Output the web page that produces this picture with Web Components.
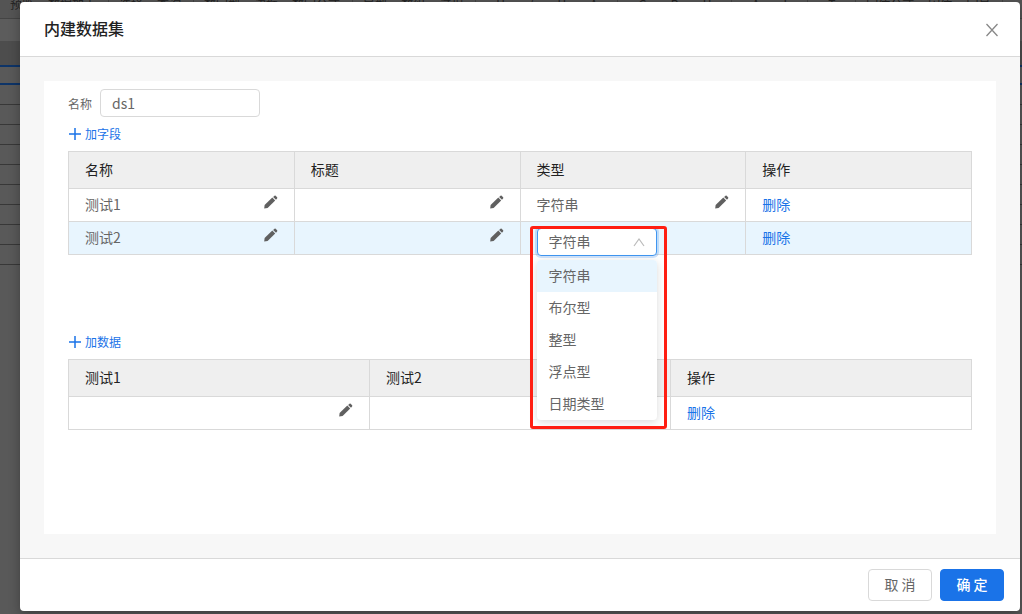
<!DOCTYPE html>
<html lang="zh-CN">
<head>
<meta charset="utf-8">
<title>内建数据集</title>
<style>
  html, body { margin: 0; height: 100%; }
  body {
    font-family: "Noto Sans CJK SC", sans-serif;
    font-size: 14px; line-height: 20px; color: #666;
    background: #595959; overflow: hidden;
    --blue: #1a73e8; --line: #d9d9d9;
  }
</style>
</head>
<body>
<designer-app></designer-app>
<script>
// Small base class: each element renders its own template into an open shadow root.
class Base extends HTMLElement {
  constructor() { super(); this.attachShadow({ mode: 'open' }); }
  connectedCallback() { this.shadowRoot.innerHTML = this.view(); }
}

// Report designer page dimmed behind the dialog.
customElements.define('page-behind', class extends Base {
  view() {
    const groups = [['预览', '数据加工'], ['选择', '查询'], ['数字型', '边框', '数字公式'], ['导型', '数组', '过程'], ['U', '/', 'U', 'A'], ['G', 'B', 'U'], ['A', 'I'], ['T'], ['字体公式', '宋体', '字号']];
    return `<style>
      :host { display: block; position: absolute; inset: 0; overflow: hidden; background: #595959; color: #222; font-size: 12px; z-index: 0; }
      .tools { display: flex; height: 18px; line-height: 8px; white-space: nowrap; background: #545454; border-bottom: 1px solid #444; }
      .group { display: flex; gap: 14px; padding: 0 12px 0 10px; border-right: 1px solid #444; }
      .icons { gap: 24px; padding: 0 20px; }
      .bar { height: 22px; background: #5c5c5c; }
      .head { height: 24px; background: #4d4d4d; }
      .sel { height: 16px; border: solid #0d3468; border-width: 2px 0; }
      .row { height: 19px; border-bottom: 1px solid #383838; }
    </style>
    <div class="tools">${groups.map(g => `<div class="group ${g[0].length === 1 ? 'icons' : ''}">${g.map(t => `<span>${t}</span>`).join('')}</div>`).join('')}</div>
    <div class="bar"></div><div class="head"></div><div class="sel"></div>
    ${'<div class="row"></div>'.repeat(9)}`;
  }
});

customElements.define('modal-dialog', class extends Base {
  view() {
    return `<style>
      :host { display: flex; flex-direction: column; flex: 1; min-width: 0; background: #fff; border-radius: 4px; box-shadow: 0 4px 12px rgba(0,0,0,.3); position: relative; }
      header { display: flex; align-items: center; justify-content: space-between; height: 54px; padding: 0 21px 0 24px; border-bottom: 1px solid var(--line); }
      h1 { margin: 0; padding-bottom: 2px; font-size: 16px; line-height: 24px; font-weight: 500; color: #222; }
      .close { display: flex; padding: 2px 0 0; border: 0; background: none; color: #888; }
      main { flex: 1; display: flex; padding: 24px; background: #f7f7f7; }
      .panel { flex: 1; min-width: 0; background: #fff; padding: 8px 24px; }
      footer { display: flex; justify-content: flex-end; gap: 8px; padding: 10px 16px; border-top: 1px solid var(--line); }
    </style>
    <header><h1>${this.getAttribute('heading')}</h1>
      <button class="close" aria-label="关闭"><svg width="14" height="14" viewBox="0 0 14 14" fill="none" stroke="currentColor" stroke-width="1.3"><path d="M1.5 1L12.5 13M12.5 1L1.5 13"/></svg></button>
    </header>
    <main><div class="panel"><slot></slot></div></main>
    <footer><slot name="actions"></slot></footer>`;
  }
});

customElements.define('ui-button', class extends Base {
  view() {
    return `<style>
      :host { display: block; }
      button { width: 64px; height: 32px; padding: 0 0 2px; font: inherit; color: #666; background: #fff; border: 1px solid var(--line); border-radius: 4px; }
      :host([primary]) button { color: #fff; background: var(--blue); border-color: var(--blue); font-weight: 500; }
    </style><button><slot></slot></button>`;
  }
});

customElements.define('text-field', class extends Base {
  view() {
    return `<style>
      :host { display: flex; align-items: center; gap: 8px; }
      label { padding-top: 2px; font-size: 12px; }
      input { box-sizing: border-box; width: 160px; height: 28px; padding: 0 11px; font: inherit; color: #666; border: 1px solid var(--line); border-radius: 4px; outline: 0; }
    </style><label for="f">${this.getAttribute('label')}</label><input id="f" value="${this.getAttribute('value')}">`;
  }
});

customElements.define('add-link', class extends Base {
  view() {
    return `<style>
      :host { display: flex; align-items: center; height: 34px; font-size: 12px; }
      a { display: flex; align-items: center; gap: 4px; color: var(--blue); text-decoration: none; }
    </style><a href="#"><svg width="13" height="12" viewBox="0 0 13 12" stroke="currentColor" stroke-width="1.5"><path d="M1 6H13M7 0V12"/></svg><slot></slot></a>`;
  }
});

customElements.define('edit-button', class extends Base {
  view() {
    return `<style>
      :host { display: block; }
      button { display: flex; padding: 0; border: 0; background: none; color: #606060; }
    </style><button aria-label="编辑"><svg width="14" height="14" viewBox="0 0 14 14" fill="currentColor"><path d="M.2 13.5L.6 10.1 8.3 2.6 11.2 5.5 3.6 13Z"/><path d="M9.1 1.9L10.5.7Q11.1.2 11.7.8L13.1 2.2Q13.6 2.8 13.1 3.4L12 4.8Z"/></svg></button>`;
  }
});

customElements.define('type-select', class extends Base {
  view() {
    const types = ['字符串', '布尔型', '整型', '浮点型', '日期类型'];
    return `<style>
      :host { display: block; position: relative; width: 120px; height: 28px; }
      select { appearance: none; box-sizing: border-box; width: 100%; height: 28px; padding: 0 11px 2px; font: inherit; color: #666; background: #fff; border: 1px solid #4096f0; border-radius: 4px; outline: 0; box-shadow: 0 0 0 2px rgba(26,115,232,.2); }
      .arrow { position: absolute; right: 12px; top: 9px; }
      ul { position: absolute; z-index: 2; top: 32px; left: 0; width: 100%; margin: 0; padding: 0; list-style: none; background: #fff; border-radius: 4px; box-shadow: 0 2px 8px rgba(0,0,0,.15); overflow: hidden; }
      li { padding: 5px 12px 7px; line-height: 20px; }
      li[aria-selected=true] { background: #e8f5fe; }
      .mark { position: absolute; z-index: 3; inset: -2px -10px -173px -7px; border: 3px solid #ff1e12; border-radius: 3px; pointer-events: none; }
    </style>
    <select aria-label="类型">${types.map(t => `<option>${t}</option>`).join('')}</select>
    <svg class="arrow" width="12" height="10" viewBox="0 0 12 10" fill="none" stroke="#bbb" stroke-width="1.2"><path d="M1 9L6 2L11 9"/></svg>
    <ul role="listbox">${types.map((t, i) => `<li role="option" aria-selected="${i === 0}">${t}</li>`).join('')}</ul>
    <div class="mark"></div>`;
  }
});

// columns="a,b,c"; rows separated by ";", cells by ",". "@" marks the open type selector.
customElements.define('data-grid', class extends Base {
  view() {
    const cols = this.getAttribute('columns').split(',');
    const rows = this.getAttribute('rows').split(';').map(r => r.split(','));
    const active = Number(this.getAttribute('active'));
    const cell = v => v === '@' ? '<td class="open"><type-select></type-select></td>'
      : `<td><div class="cell"><span>${v}</span><edit-button></edit-button></div></td>`;
    return `<style>
      :host { display: block; }
      table { width: 100%; table-layout: fixed; border-collapse: collapse; }
      th, td { box-sizing: border-box; padding: 0 16px 2px; border: 1px solid var(--line); text-align: left; font-weight: 400; }
      th { height: 37px; background: #efefef; color: #222; }
      td { height: 33px; }
      tr.active { background: #e8f5fe; }
      .cell { display: flex; align-items: center; justify-content: space-between; }
      edit-button { padding-bottom: 4px; }
      .open { padding-top: 6px; padding-bottom: 0; vertical-align: top; }
      .open type-select { margin-bottom: -8px; }
      a { color: var(--blue); text-decoration: none; }
    </style>
    <table><thead><tr>${cols.map(c => `<th scope="col">${c}</th>`).join('')}</tr></thead>
    <tbody>${rows.map((r, i) => `<tr class="${i + 1 === active ? 'active' : ''}">${r.map(cell).join('')}<td><a href="#">删除</a></td></tr>`).join('')}</tbody></table>`;
  }
});

customElements.define('designer-app', class extends Base {
  view() {
    return `<style>
      :host { display: flex; box-sizing: border-box; min-height: 100vh; padding: 2px 2px 3px 20px; position: relative; }
      .fields { min-height: 174px; }
    </style>
    <page-behind></page-behind>
    <modal-dialog heading="内建数据集" role="dialog" aria-label="内建数据集">
      <text-field label="名称" value="ds1"></text-field>
      <add-link>加字段</add-link>
      <data-grid class="fields" columns="名称,标题,类型,操作" rows="测试1,,字符串;测试2,,@" active="2"></data-grid>
      <add-link>加数据</add-link>
      <data-grid columns="测试1,测试2,操作" rows=","></data-grid>
      <ui-button slot="actions">取 消</ui-button>
      <ui-button slot="actions" primary>确 定</ui-button>
    </modal-dialog>`;
  }
});
</script>
</body>
</html>
